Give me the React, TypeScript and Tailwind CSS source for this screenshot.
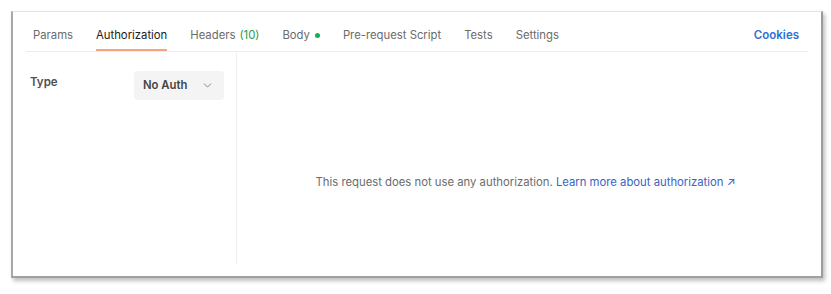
import { ChevronDown } from 'lucide-react';

const tabs = [
    { label: 'Params' },
    { label: 'Authorization', active: true },
    { label: 'Headers', count: '(10)' },
    { label: 'Body', dot: true },
    { label: 'Pre-request Script' },
    { label: 'Tests' },
    { label: 'Settings' },
];

export default function App() {
    return (
        <div className="h-[294px] w-[831px] bg-white pl-[11px] pt-[11px] font-['Inter',sans-serif]">
            <div className="flex h-[267px] w-[812px] flex-col border-t border-r-2 border-b-2 border-l-2 border-t-[#e4e4e4] border-r-[#9c9c9c] border-b-[#a0a0a0] border-l-[#a8a8a8] bg-white px-[13px] shadow-[2px_3px_4px_rgba(0,0,0,0.25)]">
                <div className="flex h-[40px] items-end border-b border-[#ededed] pl-[7px]">
                    <div className="flex gap-[23px]">
                        {tabs.map((tab) => (
                            <div
                                key={tab.label}
                                className={`flex items-center pb-[6px] text-[11.3px] leading-4 ${
                                    tab.active
                                        ? 'border-b-2 border-[#f7a57f] text-[#212121]'
                                        : 'border-b-2 border-transparent text-[#6b6b6b]'
                                }`}
                            >
                                {tab.label}
                                {tab.count && <span className="ml-1 text-[#1f9c4f]">{tab.count}</span>}
                                {tab.dot && <span className="ml-[5px] inline-block size-[5px] rounded-full bg-[#13b34f]" />}
                            </div>
                        ))}
                    </div>
                    <div className="ml-auto pb-[8px] pr-[9px] text-[11.5px] font-semibold leading-4 text-[#2f6fd6]">Cookies</div>
                </div>
                <div className="flex flex-1 pb-[12px]">
                    <div className="flex w-[211px] items-start justify-between border-r border-[#efefef] pt-[19px] pl-[4px] pr-[12px]">
                        <span className="pt-[3px] text-[11.5px] font-semibold leading-4 text-[#505050]">Type</span>
                        <div className="flex h-[29px] w-[90px] items-center justify-between rounded-[4px] bg-[#f4f4f4] pl-[9px] pr-[10px]">
                            <span className="text-[11.3px] font-semibold text-[#444]">No Auth</span>
                            <ChevronDown className="size-[13px] text-[#777]" strokeWidth={1.6} />
                        </div>
                    </div>
                    <div className="flex flex-1 justify-center pt-[122px] pl-[6px]">
                        <p className="text-[11.3px] leading-4 text-[#6b6b6b]">
                            This request does not use any authorization.{' '}
                            <span className="text-[#3a63c4]">Learn more about authorization ↗</span>
                        </p>
                    </div>
                </div>
            </div>
        </div>
    );
}
